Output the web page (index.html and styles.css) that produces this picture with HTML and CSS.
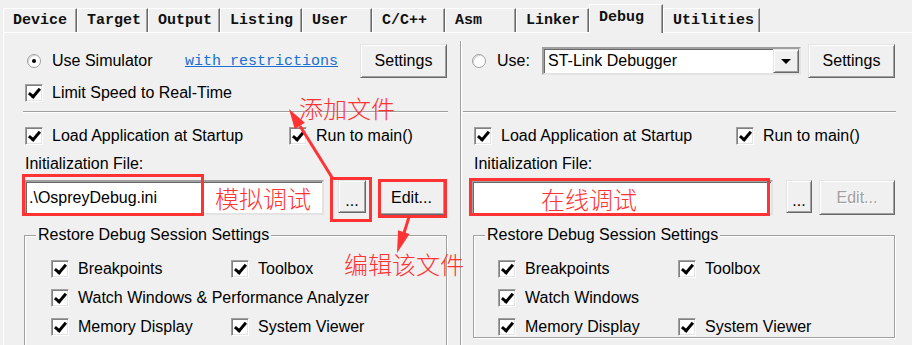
FILE: index.html
```html
<!DOCTYPE html>
<html lang="en">
<head>
    <meta charset="UTF-8">
    <title>Options for Target - Debug</title>
    <link rel="stylesheet" href="styles.css">
</head>
<body>
    <div class="dialog">
        <div class="tabs">
            <div class="tab">Device</div>
            <div class="tab">Target</div>
            <div class="tab">Output</div>
            <div class="tab">Listing</div>
            <div class="tab">User</div>
            <div class="tab">C/C++</div>
            <div class="tab">Asm</div>
            <div class="tab">Linker</div>
            <div class="tab active">Debug</div>
            <div class="tab">Utilities</div>
        </div>

        <div class="panel">
            <!-- simulator side -->
            <div class="col col-left">
                <div class="row-top">
                    <label class="opt opt-sim"><span class="radio on"></span>Use Simulator</label>
                    <a class="link" href="#">with restrictions</a>
                    <button class="btn btn-settings">Settings</button>
                </div>
                <div class="row-check">
                    <label class="chk"><span class="cb on"></span>Limit Speed to Real-Time</label>
                </div>
                <div class="sep"></div>
                <div class="row-check row-load">
                    <label class="chk chk-first"><span class="cb on"></span>Load Application at Startup</label>
                    <label class="chk"><span class="cb on"></span>Run to main()</label>
                </div>
                <div class="lbl">Initialization File:</div>
                <div class="row-file">
                    <div class="field">.\OspreyDebug.ini</div>
                    <button class="btn btn-browse">...</button>
                    <button class="btn btn-edit">Edit...</button>
                </div>
                <fieldset class="group">
                    <legend>Restore Debug Session Settings</legend>
                    <div class="grow">
                        <label class="chk chk-col"><span class="cb on"></span>Breakpoints</label>
                        <label class="chk"><span class="cb on"></span>Toolbox</label>
                    </div>
                    <div class="grow">
                        <label class="chk"><span class="cb on"></span>Watch Windows &amp; Performance Analyzer</label>
                    </div>
                    <div class="grow">
                        <label class="chk chk-col"><span class="cb on"></span>Memory Display</label>
                        <label class="chk"><span class="cb on"></span>System Viewer</label>
                    </div>
                </fieldset>
            </div>

            <!-- target side -->
            <div class="col col-right">
                <div class="row-top">
                    <label class="opt opt-use"><span class="radio"></span>Use:</label>
                    <div class="combo">
                        <span class="combo-text">ST-Link Debugger</span>
                        <span class="combo-btn"><span class="tri"></span></span>
                    </div>
                    <button class="btn btn-settings">Settings</button>
                </div>
                <div class="row-check"></div>
                <div class="sep"></div>
                <div class="row-check row-load">
                    <label class="chk chk-first"><span class="cb on"></span>Load Application at Startup</label>
                    <label class="chk"><span class="cb on"></span>Run to main()</label>
                </div>
                <div class="lbl">Initialization File:</div>
                <div class="row-file">
                    <div class="field"></div>
                    <button class="btn btn-browse">...</button>
                    <button class="btn btn-edit" disabled>Edit...</button>
                </div>
                <fieldset class="group">
                    <legend>Restore Debug Session Settings</legend>
                    <div class="grow">
                        <label class="chk chk-col"><span class="cb on"></span>Breakpoints</label>
                        <label class="chk"><span class="cb on"></span>Toolbox</label>
                    </div>
                    <div class="grow">
                        <label class="chk"><span class="cb on"></span>Watch Windows</label>
                    </div>
                    <div class="grow">
                        <label class="chk chk-col"><span class="cb on"></span>Memory Display</label>
                        <label class="chk"><span class="cb on"></span>System Viewer</label>
                    </div>
                </fieldset>
            </div>
        </div>
    </div>

    <!-- red notes drawn over the dialog -->
    <div class="notes">
        <div class="mark mark-field"></div>
        <div class="mark mark-browse"></div>
        <div class="mark mark-edit"></div>
        <div class="mark mark-online"></div>
        <div class="note note-add">添加文件</div>
        <div class="note note-sim">模拟调试</div>
        <div class="note note-online">在线调试</div>
        <div class="note note-edit">编辑该文件</div>
        <svg class="arrows" width="912" height="345" viewBox="0 0 912 345">
            <line x1="333" y1="179" x2="300" y2="126" stroke="#ff3333" stroke-width="3"/>
            <polygon points="289,109 304.9,122.7 294.7,129.1" fill="#ff3333"/>
            <line x1="409" y1="217" x2="404" y2="233" stroke="#ff3333" stroke-width="3"/>
            <polygon points="397,253 409.5,233.9 398.1,230.2" fill="#ff3333"/>
        </svg>
    </div>
</body>
</html>
```

FILE: styles.css
```css
* {
    box-sizing: border-box;
}
body {
    margin: 0;
    width: 912px;
    height: 345px;
    overflow: hidden;
    position: relative;
    background-color: #f0f0f0;
    font-family: "Liberation Sans", Arial, sans-serif;
    font-size: 16px;
    color: #000;
}
.dialog {
    padding-left: 3px;
}

/* tab strip */
.tabs {
    display: flex;
    align-items: flex-end;
    height: 32px;
    font-family: "Liberation Mono", monospace;
    font-size: 15px;
    font-weight: bold;
    color: #111;
}
.tab {
    height: 24px;
    line-height: 23px;
    padding-left: 9px;
    border-top: 1px solid #fff;
    border-left: 1px solid #fff;
    border-right: 1px solid #696969;
    box-shadow: inset -1px 0 #a0a0a0;
    white-space: nowrap;
}
.tab:nth-child(1) { width: 74px; }
.tab:nth-child(2) { width: 71px; }
.tab:nth-child(3) { width: 72px; }
.tab:nth-child(4) { width: 82px; }
.tab:nth-child(5) { width: 70px; }
.tab:nth-child(6) { width: 73px; }
.tab:nth-child(7) { width: 71px; }
.tab:nth-child(8) { width: 73px; }
.tab:nth-child(9) { width: 74px; }
.tab:nth-child(10) { width: 97px; }
.tab.active {
    height: 29px;
    line-height: 25px;
    margin-bottom: -1px;
    background-color: #f0f0f0;
    position: relative;
    z-index: 1;
}

.panel {
    display: flex;
    height: 313px;
    overflow: hidden;
    border-top: 1px solid #fff;
    border-left: 1px solid #fff;
}
.col {
    display: flex;
    flex-direction: column;
}
.col > * {
    flex-shrink: 0;
}
.col-left {
    width: 456px;
    padding: 0 13px 0 20px;
}
.col-right {
    flex: 1;
    margin-top: 8px;
    padding: 0 17px 0 12px;
    border-left: 1px solid #a0a0a0;
    box-shadow: inset 1px 0 #fff;
}

.row-top {
    display: flex;
    align-items: center;
    height: 34px;
    margin-top: 11px;
}
.col-right .row-top {
    margin-top: 3px;
}
.opt {
    display: flex;
    align-items: center;
    gap: 11px;
}
.opt-sim {
    width: 161px;
}
.opt-sim .radio {
    margin-left: 3px;
}
.opt-use {
    width: 69px;
}
.opt-use .radio {
    margin-left: -1px;
}
.radio {
    position: relative;
    width: 14px;
    height: 14px;
    border-radius: 50%;
    background-color: #fff;
    border: 1px solid #a0a0a0;
    box-shadow: inset 1px 1px #d4d4d4;
}
.radio.on::after {
    content: "";
    position: absolute;
    left: 4px;
    top: 4px;
    width: 4px;
    height: 4px;
    border-radius: 50%;
    background-color: #000;
}
.link {
    font-family: "Liberation Mono", monospace;
    font-size: 15px;
    color: #1a6fd1;
    text-decoration: underline;
}

.btn {
    height: 34px;
    padding: 0;
    font-family: "Liberation Sans", Arial, sans-serif;
    font-size: 16px;
    color: #000;
    background-color: #f0f0f0;
    border: 1px solid;
    border-color: #e3e3e3 #696969 #696969 #e3e3e3;
    box-shadow: inset 1px 1px #fff, inset -1px -1px #a0a0a0;
}
.btn:disabled {
    color: #a0a0a0;
    text-shadow: 1px 1px #fff;
}
.btn-settings {
    width: 87px;
    margin-left: auto;
}

.row-check {
    display: flex;
    align-items: center;
    height: 22px;
    margin-top: 4px;
}
.chk {
    display: flex;
    align-items: center;
    gap: 9px;
    white-space: nowrap;
}
.chk-first {
    width: 264px;
}
.col-right .chk-first {
    width: 262px;
}
.cb {
    position: relative;
    flex: none;
    width: 18px;
    height: 18px;
    margin-left: 1px;
    background-color: #fff;
    border: 1px solid;
    border-color: #a0a0a0 #fff #fff #a0a0a0;
    box-shadow: inset 1px 1px #808080, inset -1px -1px #e3e3e3;
}
.cb.on::after {
    content: "";
    position: absolute;
    left: 5px;
    top: 1px;
    width: 4px;
    height: 9px;
    border: solid #000;
    border-width: 0 3px 3px 0;
    transform: rotate(40deg);
}

.sep {
    margin: 7px -1px 0;
    border-top: 1px solid #a0a0a0;
    border-bottom: 1px solid #fff;
}
.col-right .sep {
    margin-left: -10px;
    margin-right: -1px;
}
.row-load {
    margin-top: 12px;
}
.lbl {
    margin-top: 7px;
    padding-left: 1px;
    line-height: 20px;
}

.row-file {
    display: flex;
    height: 35px;
    margin-top: 6px;
}
.field {
    width: 300px;
    height: 35px;
    padding-left: 3px;
    line-height: 31px;
    background-color: #fff;
    border: 2px solid;
    border-color: #a0a0a0 #e3e3e3 #e3e3e3 #a0a0a0;
    box-shadow: inset 1px 1px #696969;
}
.btn-browse {
    width: 28px;
    height: 33px;
    margin-left: 14px;
    padding-top: 8px;
}
.btn-edit {
    width: 67px;
    height: 35px;
    margin-left: 12px;
}
.col-right .field {
    width: 302px;
    margin-left: -2px;
}
.col-right .btn-browse {
    width: 26px;
    margin-left: 13px;
}
.col-right .btn-edit {
    width: 76px;
    margin-left: 7px;
}

.combo {
    display: flex;
    width: 259px;
    height: 28px;
    background-color: #fff;
    border: 2px solid;
    border-color: #a0a0a0 #e3e3e3 #e3e3e3 #a0a0a0;
    box-shadow: inset 1px 1px #696969;
}
.combo-text {
    flex: 1;
    padding-left: 4px;
    line-height: 24px;
}
.combo-btn {
    display: flex;
    align-items: center;
    justify-content: center;
    width: 26px;
    background-color: #f0f0f0;
    border: 1px solid;
    border-color: #e3e3e3 #696969 #696969 #e3e3e3;
    box-shadow: inset 1px 1px #fff, inset -1px -1px #a0a0a0;
}
.tri {
    width: 0;
    height: 0;
    border-left: 5px solid transparent;
    border-right: 5px solid transparent;
    border-top: 5px solid #000;
}

.group {
    margin: 10px 0 0;
    padding: 9px 0 0;
    height: 121px;
    min-width: 0;
    border: 1px solid #a0a0a0;
    box-shadow: inset 1px 1px #fff, 1px 1px #fff;
}
.col-right .group {
    height: 113px;
}
.group legend {
    margin-left: 11px;
    padding: 0 2px;
    line-height: 20px;
    background-color: #f0f0f0;
}
.grow {
    display: flex;
    align-items: center;
    height: 29px;
    padding-left: 25px;
}
.col-right .grow {
    padding-left: 23px;
}
.chk-col {
    width: 180px;
}

/* annotations */
.notes {
    position: absolute;
    left: 0;
    top: 0;
    width: 912px;
    height: 345px;
    pointer-events: none;
}
.mark {
    position: absolute;
    border: 3px solid #ff3333;
}
.mark-field {
    left: 22px;
    top: 174px;
    width: 182px;
    height: 42px;
}
.mark-browse {
    left: 330px;
    top: 177px;
    width: 42px;
    height: 45px;
}
.mark-edit {
    left: 378px;
    top: 179px;
    width: 69px;
    height: 39px;
}
.mark-online {
    left: 469px;
    top: 178px;
    width: 301px;
    height: 38px;
}
.note {
    position: absolute;
    color: #ff3333;
    font-family: "Noto Sans CJK SC", sans-serif;
    font-size: 24px;
    font-weight: 300;
    line-height: 24px;
    white-space: nowrap;
}
.note-add {
    left: 299px;
    top: 96px;
}
.note-sim {
    left: 215px;
    top: 186px;
}
.note-online {
    left: 541px;
    top: 187px;
}
.note-edit {
    left: 344px;
    top: 252px;
}
.arrows {
    position: absolute;
    left: 0;
    top: 0;
}
```
